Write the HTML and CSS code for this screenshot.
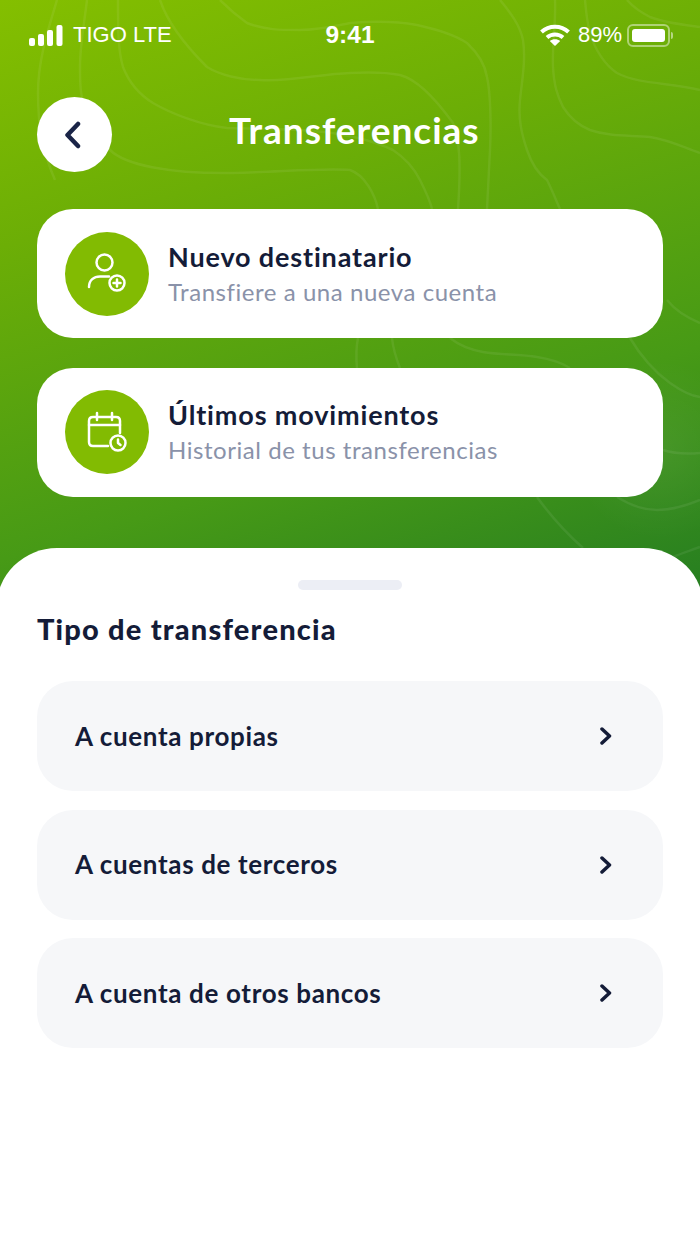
FILE: index.html
```html
<!DOCTYPE html>
<html lang="es">

<head>
    <meta charset="UTF-8">
    <meta name="viewport" content="width=device-width, initial-scale=1.0">
    <title>Transferencias</title>
    <link rel="stylesheet" href="styles.css">
</head>

<body>
    <div class="screen">
        <div class="hero">
            <svg class="contours" width="700" height="610" viewBox="0 0 700 610" fill="none">
                <path d="M57 0C48 30 38 60 38 93C38 125 42 150 55 180" />
                <path d="M87 0C84 25 80 45 80 67C80 80 80 90 82 97C88 125 100 140 110 150C125 165 170 174 233 173C280 172 320 168 350 170C365 175 375 195 378 209" />
                <path d="M118 0C118 30 118 50 123 67C130 85 140 95 153 103C170 113 200 125 227 128C270 130 340 125 393 150C405 158 415 170 420 180C425 190 430 200 432 209" />
                <path d="M160 0C165 15 175 35 207 67C220 75 240 80 260 80C290 82 320 74 350 73C370 72 385 72 400 75C420 80 440 105 453 123C460 140 461 165 458 209" />
                <path d="M220 0C230 10 240 18 247 23C265 30 280 30 300 30C320 30 335 26 350 23C375 21 400 22 417 25C440 30 455 35 467 43C480 55 485 65 487 77C491 95 491 130 490 150C489 170 488 190 487 209" />
                <path d="M500 0C510 12 520 25 523 40C526 60 522 80 520 100C518 120 522 135 527 150C532 165 540 175 547 180C552 190 556 200 560 209" />
                <path d="M555 0C556 25 552 45 553 67C554 85 557 95 563 107C570 118 580 126 590 130C610 137 630 135 650 137C670 140 685 148 700 153" />
                <path d="M585 0C586 12 587 22 590 33C595 50 605 65 617 73C640 85 670 82 700 90" />
                <path d="M627 0C634 8 642 13 650 17C665 23 685 25 700 27" />
                <path d="M667 300C675 310 688 318 700 323" />
                <path d="M630 338C640 355 655 372 670 383C680 390 690 396 700 397" />
                <path d="M358 338C356 348 356 358 357 368" />
                <path d="M392 338C393 348 396 358 400 368" />
                <path d="M450 338C460 346 472 350 483 352C500 355 520 354 537 357C550 359 562 363 570 368" />
                <path d="M663 450C675 454 688 454 700 453" />
                <path d="M537 497C550 515 565 532 583 548" />
                <path d="M617 497C630 505 645 510 657 510C672 510 688 505 700 500" />
                <path d="M673 557C682 553 692 550 700 547" />
            </svg>
            <div class="status-bar">
                <div class="status-left">
                    <svg width="34" height="21" viewBox="0 0 34 21" fill="#fff">
                        <rect x="0" y="13" width="6" height="8" rx="2" />
                        <rect x="9" y="9" width="6" height="12" rx="2" />
                        <rect x="18" y="5" width="6" height="16" rx="2" />
                        <rect x="27.500" y="0" width="6" height="21" rx="2" />
                    </svg>
                    <span>TIGO LTE</span>
                </div>
                <div class="status-time">9:41</div>
                <div class="status-right">
                    <svg class="wifi" width="30" height="22" viewBox="0 0 30 22" fill="none" stroke="#fff" stroke-width="4">
                        <path d="M1.500 8C9 1 21 1 28.500 8" />
                        <path d="M7 13.500C11.500 9.500 18.500 9.500 23 13.500" />
                        <path d="M15 22L9.800 17C12.600 14.600 17.400 14.600 20.200 17Z" fill="#fff" stroke="none" />
                    </svg>
                    <span>89%</span>
                    <div class="battery"><div class="battery-fill"></div></div>
                    <div class="battery-nub"></div>
                </div>
            </div>

            <div class="top-bar">
                <button class="back-btn">
                    <svg width="20" height="28" viewBox="0 0 20 28" fill="none" stroke="#1a2447" stroke-width="4.500" stroke-linecap="round" stroke-linejoin="round">
                        <path d="M15 3L4.500 14L15 25" />
                    </svg>
                </button>
                <h1 class="title">Transferencias</h1>
            </div>

            <div class="cards">
                <a class="card">
                    <span class="card-icon">
                        <svg width="44" height="44" viewBox="0 0 44 44" fill="none" stroke="#fff" stroke-width="2.500" stroke-linecap="round">
                            <circle cx="19.500" cy="10.500" r="8" />
                            <path d="M4 35C4 28 9 24.500 15 24.500H24" />
                            <circle cx="32" cy="31" r="7.500" />
                            <path d="M32 27.500V34.500M28.500 31H35.500" />
                        </svg>
                    </span>
                    <span class="card-text">
                        <span class="card-title">Nuevo destinatario</span>
                        <span class="card-sub">Transfiere a una nueva cuenta</span>
                    </span>
                </a>
                <a class="card">
                    <span class="card-icon">
                        <svg width="44" height="44" viewBox="0 0 44 44" fill="none" stroke="#fff" stroke-width="2.500" stroke-linecap="round" stroke-linejoin="round">
                            <path d="M23 36H8C5.500 36 4 34.500 4 32V11C4 8.500 5.500 7 8 7H31C33.500 7 35 8.500 35 11V23" />
                            <path d="M4 15H35M12 3V10M27 3V10" />
                            <circle cx="33" cy="33" r="7.500" />
                            <path d="M33 29.500V33L35.500 35" />
                        </svg>
                    </span>
                    <span class="card-text">
                        <span class="card-title">Últimos movimientos</span>
                        <span class="card-sub">Historial de tus transferencias</span>
                    </span>
                </a>
            </div>
        </div>

        <div class="sheet">
            <div class="handle"></div>
            <h2 class="sheet-title">Tipo de transferencia</h2>
            <div class="list">
                <a class="list-item">
                    <span>A cuenta propias</span>
                    <svg class="chevron" width="12" height="18" viewBox="0 0 12 18" fill="none" stroke="#141c38" stroke-width="3.500" stroke-linecap="round" stroke-linejoin="round">
                        <path d="M2 2L9.500 9L2 16" />
                    </svg>
                </a>
                <a class="list-item">
                    <span>A cuentas de terceros</span>
                    <svg class="chevron" width="12" height="18" viewBox="0 0 12 18" fill="none" stroke="#141c38" stroke-width="3.500" stroke-linecap="round" stroke-linejoin="round">
                        <path d="M2 2L9.500 9L2 16" />
                    </svg>
                </a>
                <a class="list-item">
                    <span>A cuenta de otros bancos</span>
                    <svg class="chevron" width="12" height="18" viewBox="0 0 12 18" fill="none" stroke="#141c38" stroke-width="3.500" stroke-linecap="round" stroke-linejoin="round">
                        <path d="M2 2L9.500 9L2 16" />
                    </svg>
                </a>
            </div>
        </div>
    </div>
</body>

</html>
```

FILE: styles.css
```css
* {
    box-sizing: border-box;
}

html,
body {
    margin: 0;
    padding: 0;
}

body {
    background: #fff;
    font-family: "Lato", "Open Sans", sans-serif;
    color: #141c38;
}

.screen {
    width: 700px;
    min-height: 1244px;
    background: #fff;
    overflow: hidden;
}

.hero {
    position: relative;
    height: 610px;
    padding-top: 21px;
    background:
        radial-gradient(circle at 660px 450px, rgba(255, 255, 255, 0.06), rgba(255, 255, 255, 0) 90px),
        linear-gradient(163deg, #84bf00 0%, #6cae06 30%, #479a16 68%, #247c22 100%);
}

.contours {
    position: absolute;
    top: 0;
    left: 0;
}

.contours path {
    stroke: rgba(255, 255, 255, 0.07);
    stroke-width: 2.500;
}

.status-bar {
    position: relative;
    display: grid;
    grid-template-columns: 1fr auto 1fr;
    align-items: center;
    height: 26px;
    padding: 0 27px 0 29px;
    color: #fff;
    font-family: "Liberation Sans", Arial, sans-serif;
    font-size: 22px;
}

.status-left {
    display: flex;
    align-items: center;
    gap: 10px;
}

.status-time {
    font-size: 24.500px;
    font-weight: bold;
    padding-right: 2px;
}

.status-right {
    display: flex;
    align-items: center;
    justify-content: flex-end;
}

.wifi {
    margin-right: 8px;
}

.battery {
    width: 43px;
    height: 23px;
    margin-left: 5px;
    padding: 3px;
    border: 2px solid rgba(255, 255, 255, 0.45);
    border-radius: 6px;
}

.battery-fill {
    width: 100%;
    height: 100%;
    background: #fff;
    border-radius: 3px;
}

.battery-nub {
    width: 2px;
    height: 7px;
    margin-left: 1px;
    background: rgba(255, 255, 255, 0.5);
    border-radius: 0 2px 2px 0;
}

.top-bar {
    position: relative;
    display: flex;
    align-items: center;
    margin-top: 50px;
    padding-left: 37px;
}

.back-btn {
    display: flex;
    align-items: center;
    justify-content: center;
    width: 75px;
    height: 75px;
    padding: 0 3px 0 0;
    background: #fff;
    border: 0;
    border-radius: 50%;
}

.title {
    margin: 0 0 9px 117px;
    color: #fff;
    font-size: 37px;
    font-weight: 700;
    line-height: 44px;
    letter-spacing: 1px;
}

.cards {
    position: relative;
    display: flex;
    flex-direction: column;
    gap: 29.500px;
    margin: 37px 37px 0;
}

.card {
    display: flex;
    align-items: center;
    gap: 19px;
    height: 129px;
    padding-left: 28px;
    background: #fff;
    border-radius: 36px;
}

.card-icon {
    display: flex;
    align-items: center;
    justify-content: center;
    flex: none;
    width: 84px;
    height: 84px;
    background: #82bb02;
    border-radius: 50%;
}

.card-text {
    display: flex;
    flex-direction: column;
    gap: 2px;
}

.card-title {
    font-size: 27px;
    font-weight: 700;
    line-height: 34px;
    letter-spacing: 0.850px;
}

.card-sub {
    color: #8a92a9;
    font-size: 24px;
    line-height: 32px;
    letter-spacing: 0.550px;
}

.sheet {
    position: relative;
    margin: -62px -4px 0;
    padding: 32px 41px 0;
    background: #fff;
    border-radius: 61px 61px 0 0;
}

.handle {
    width: 104px;
    height: 10px;
    margin: 0 auto;
    background: #eceef5;
    border-radius: 5px;
}

.sheet-title {
    margin: 19px 0 32px;
    font-size: 29px;
    font-weight: 900;
    line-height: 40px;
    letter-spacing: 1.200px;
}

.list {
    display: flex;
    flex-direction: column;
    gap: 18.500px;
}

.list-item {
    display: flex;
    align-items: center;
    justify-content: space-between;
    height: 110px;
    padding: 0 51px 1px 38px;
    background: #f6f7f9;
    border-radius: 36px;
    font-size: 26px;
    font-weight: 700;
    letter-spacing: 0.650px;
}

.chevron {
    margin-top: 1px;
}
```
